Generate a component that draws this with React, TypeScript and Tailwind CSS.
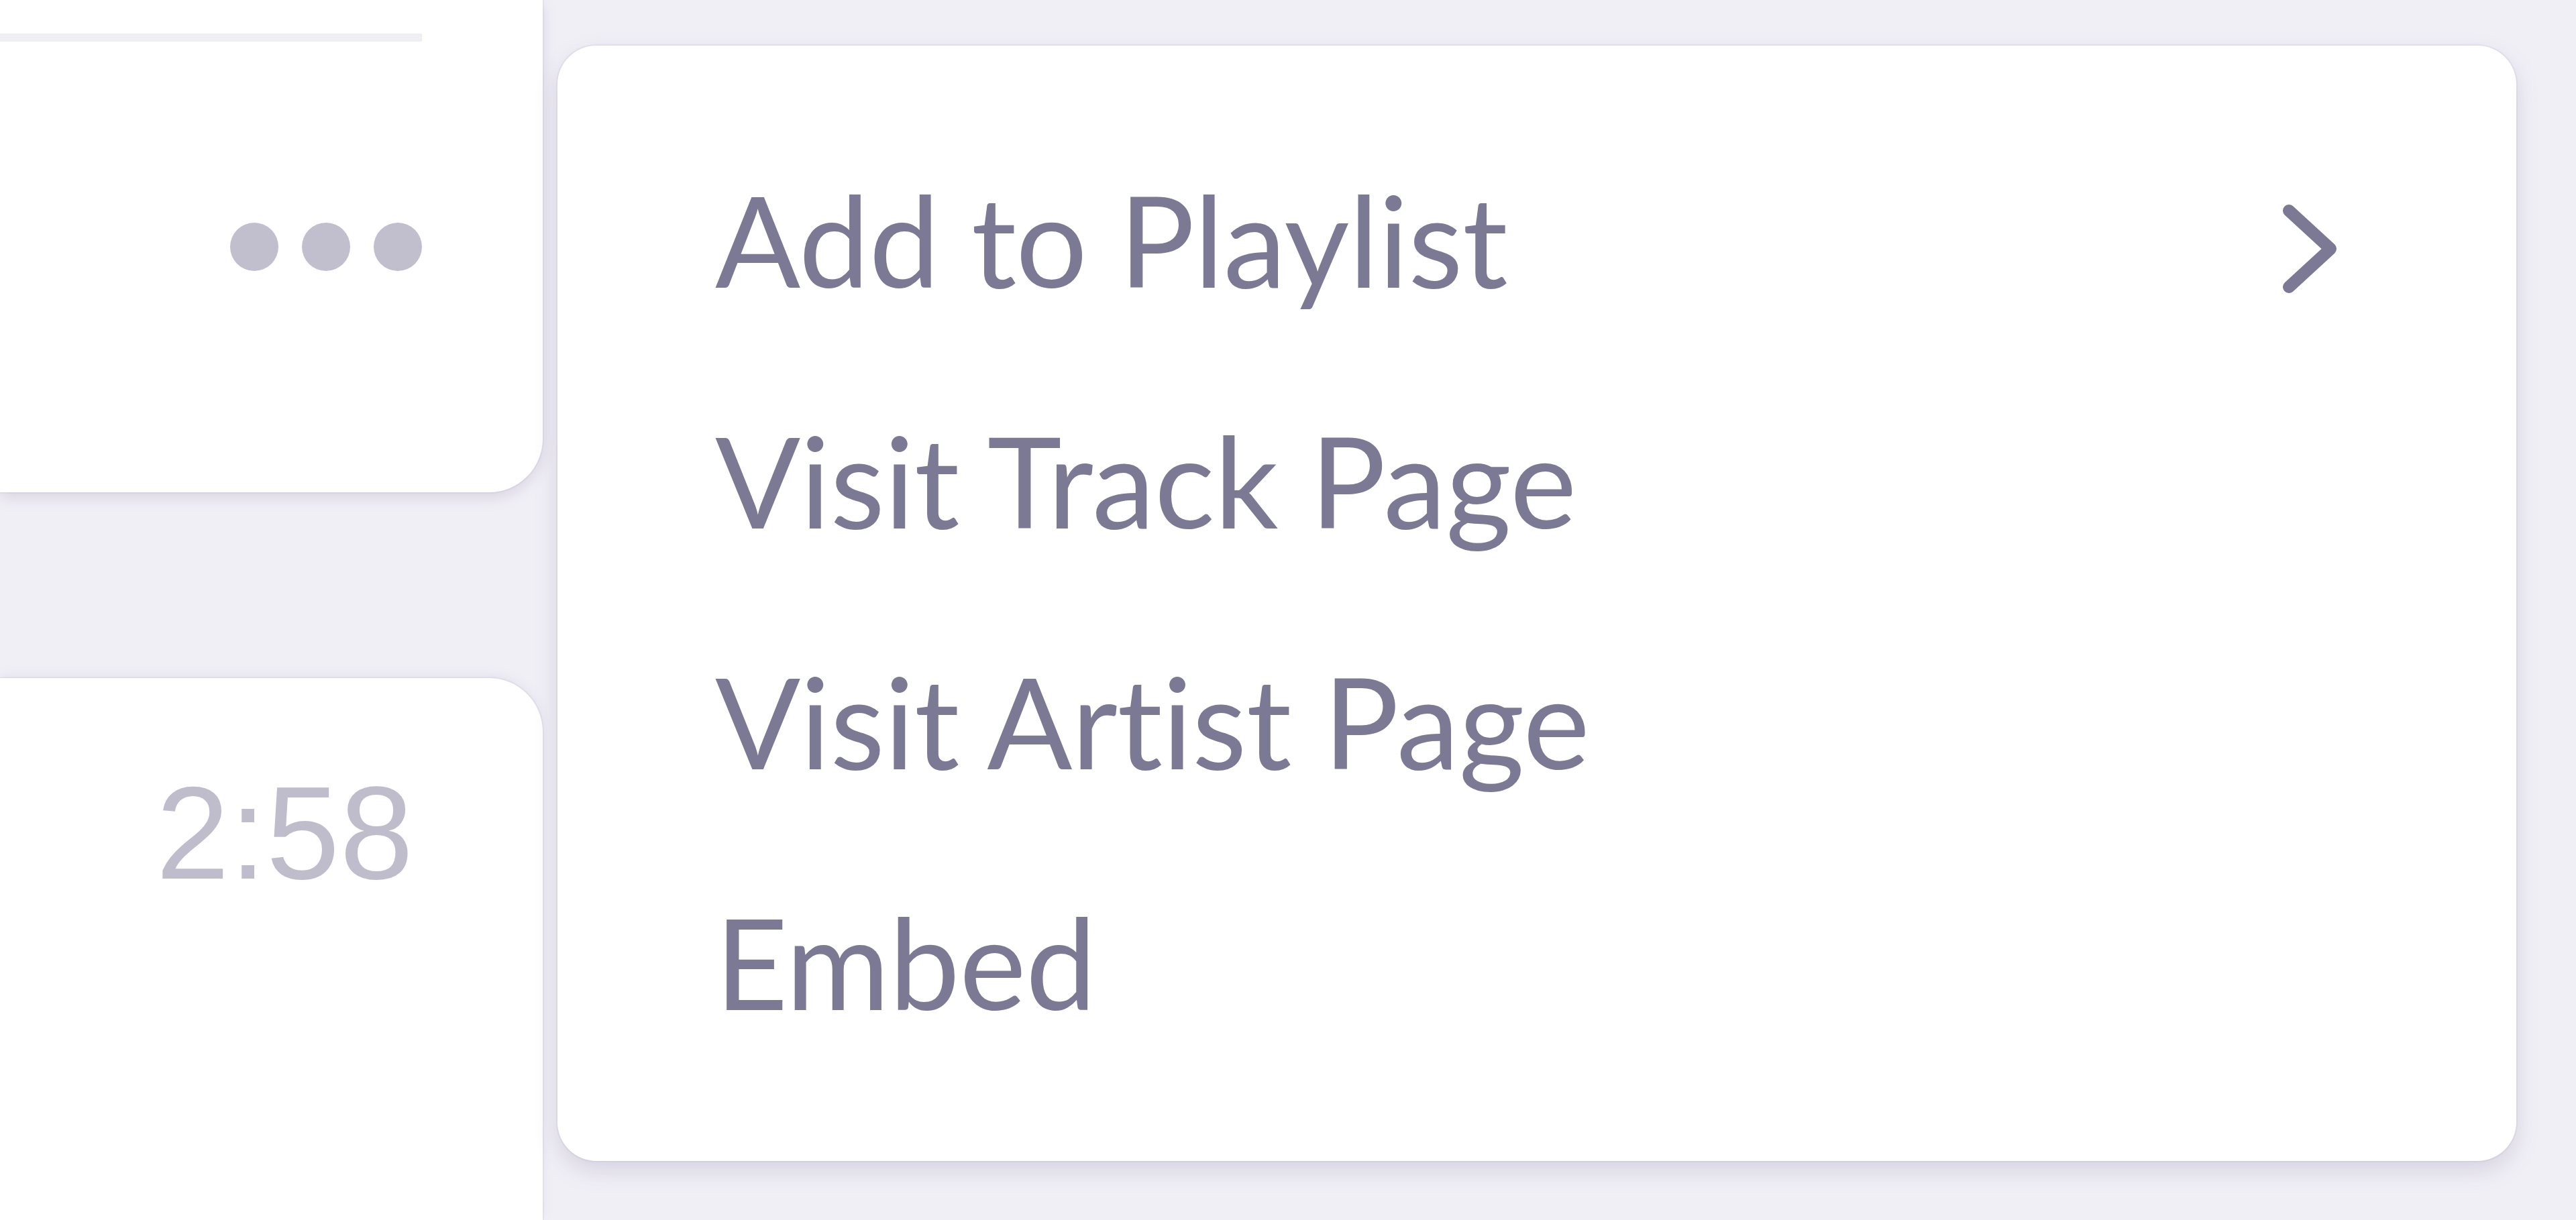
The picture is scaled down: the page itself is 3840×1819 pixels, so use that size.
const menuItems = ["Add to Playlist", "Visit Track Page", "Visit Artist Page", "Embed"];

const Chevron = () => (
  <svg width="82" height="134" viewBox="0 0 82 134" fill="none" className="mt-[30px] shrink-0">
    <path d="M10 10 L72 67 L10 124" stroke="#7b7994" strokeWidth="18" strokeLinecap="round" strokeLinejoin="round" />
  </svg>
);

export default function App() {
  return (
    <div className="w-[3840px] h-[1819px] overflow-hidden bg-[#f1eff6] flex font-['Lato',_sans-serif]">
      {/* track rows, cut off at the left */}
      <div className="w-[809px] shrink-0 flex flex-col">
        <div className="h-[734px] bg-white rounded-br-[80px] shadow-[0_0_0_2px_rgba(120,110,150,0.07),0_8px_22px_rgba(70,60,110,0.14)] pr-[180px] flex flex-col">
          <div className="mt-[50px] h-[12px] bg-[#efeff3]" />
          <div className="flex-1 flex items-center justify-end pb-[52px]">
            <div className="flex gap-[35px] mt-[-8px]">
              <span className="w-[72px] h-[72px] rounded-full bg-[#c1bfcd]" />
              <span className="w-[72px] h-[72px] rounded-full bg-[#c1bfcd]" />
              <span className="w-[72px] h-[72px] rounded-full bg-[#c1bfcd]" />
            </div>
          </div>
        </div>
        <div className="mt-[277px] flex-1 bg-white rounded-tr-[80px] shadow-[0_0_0_2px_rgba(120,110,150,0.07),0_-4px_18px_rgba(70,60,110,0.08)] flex justify-end pr-[193px] pt-[133px]">
          <span className="text-[197px] leading-none text-[#bfbdcc] font-['Liberation_Sans',_sans-serif]">2:58</span>
        </div>
      </div>

      {/* context menu */}
      <div className="ml-[22px] mt-[68px] w-[2920px] h-[1663px] bg-white rounded-[58px] shadow-[0_0_0_2px_rgba(120,110,150,0.08),0_14px_36px_rgba(70,60,110,0.16)] pt-[108px] pl-[235px] pr-[267px] flex flex-col">
        {menuItems.map((item, i) => (
          <div key={item} className="h-[359px] flex items-center justify-between">
            <span className="text-[188px] leading-none tracking-[-0.5px] text-[#7b7994]">{item}</span>
            {i === 0 && <Chevron />}
          </div>
        ))}
      </div>
    </div>
  );
}
